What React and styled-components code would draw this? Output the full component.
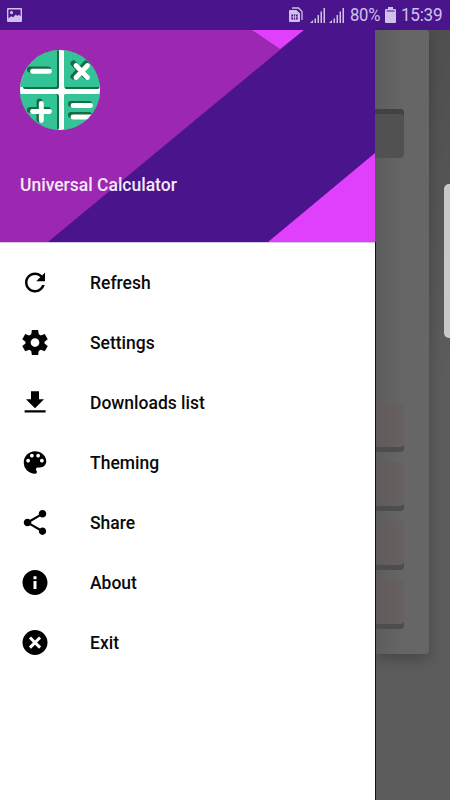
import React from 'react'
import styled, { createGlobalStyle } from 'styled-components'

const menuItems = [
  {
    label: 'Refresh',
    path: 'M17.65 6.35C16.2 4.9 14.21 4 12 4c-4.42 0-7.99 3.58-7.99 8s3.57 8 7.99 8c3.73 0 6.84-2.55 7.73-6h-2.08c-.82 2.33-3.04 4-5.65 4-3.31 0-6-2.69-6-6s2.69-6 6-6c1.66 0 3.14.69 4.22 1.78L13 11h7V4l-2.35 2.35z',
  },
  {
    label: 'Settings',
    path: 'M9.5 2h5l.5 3.3 1.7 1 3.1-1.2 2.4 4.200-2.600 2v1.400l2.600 2-2.400 4.200-3.100-1.200-1.700 1-.5 3.300h-5l-.5-3.300-1.700-1-3.100 1.200-2.400-4.200 2.600-2v-1.400l-2.600-2 2.400-4.200 3.100 1.200 1.700-1zM12 8.500a3.500 3.500 0 1 0 0 7 3.500 3.500 0 0 0 0-7z',
  },
  {
    label: 'Downloads list',
    path: 'M19.2 9.300h-4V3H8.800v6.300h-4l7.200 7.200 7.200-7.200zM3.700 18.200V20h16.800v-1.800z',
  },
  {
    label: 'Theming',
    path: 'M12 3c-4.97 0-9 4.03-9 9s4.03 9 9 9c.83 0 1.5-.67 1.5-1.5 0-.39-.15-.74-.39-1.01-.23-.26-.38-.61-.38-.99 0-.83.67-1.5 1.5-1.5H16c2.76 0 5-2.24 5-5 0-4.42-4.03-8-9-8zm-5.5 9c-.83 0-1.5-.67-1.5-1.5S5.67 9 6.5 9 8 9.67 8 10.5 7.33 12 6.5 12zm3-4C8.67 8 8 7.33 8 6.5S8.67 5 9.5 5s1.5.67 1.5 1.5S10.33 8 9.5 8zm5 0c-.83 0-1.5-.67-1.5-1.5S13.67 5 14.5 5s1.5.67 1.5 1.5S15.33 8 14.5 8zm3 4c-.83 0-1.5-.67-1.5-1.5S16.67 9 17.5 9s1.5.67 1.5 1.5-.67 1.5-1.5 1.5z',
  },
  {
    label: 'Share',
    path: 'M18 16.08c-.76 0-1.44.3-1.96.77L8.91 12.7c.05-.23.09-.46.09-.7s-.04-.47-.09-.7l7.05-4.11c.54.5 1.25.81 2.04.81 1.66 0 3-1.34 3-3s-1.34-3-3-3-3 1.34-3 3c0 .24.04.47.09.7L8.04 9.81C7.5 9.31 6.79 9 6 9c-1.66 0-3 1.34-3 3s1.34 3 3 3c.79 0 1.5-.31 2.04-.81l7.12 4.16c-.05.21-.08.43-.08.65 0 1.61 1.31 2.92 2.92 2.92 1.61 0 2.92-1.31 2.92-2.92s-1.31-2.92-2.92-2.92z',
  },
  {
    label: 'About',
    path: 'M12 2C6.48 2 2 6.48 2 12s4.48 10 10 10 10-4.48 10-10S17.52 2 12 2zm1.200 15.200h-2.400v-6.400h2.400v6.400zm0-7.900h-2.400V6.900h2.400v2.400z',
  },
  {
    label: 'Exit',
    path: 'M12 2a10 10 0 1 0 0 20 10 10 0 0 0 0-20zm4.900 13.200l-1.700 1.700-3.200-3.200-3.200 3.200-1.700-1.700 3.200-3.200-3.200-3.200 1.700-1.700 3.200 3.200 3.200-3.200 1.700 1.700-3.200 3.200z',
  },
]

const PictureIcon = () => (
  <svg width='15' height='14' viewBox='0 0 15 14'>
    <path
      fill='#cfc1ea'
      fillRule='evenodd'
      d='M1 0h13a1 1 0 0 1 1 1v12a1 1 0 0 1-1 1H1a1 1 0 0 1-1-1V1a1 1 0 0 1 1-1zM1.400 1.400v8.800l3-2 1.800 1 2.600-2.600 1.500 1.400 1.500-1.200 1.800 1.500V1.400zM4.500 3a1.600 1.600 0 1 1 0 3.200 1.600 1.600 0 0 1 0-3.200z'
    />
  </svg>
)

const SimIcon = () => (
  <svg width='14' height='16' viewBox='0 0 14 16'>
    <path d='M3 1h6.500l3.500 3.500V13' fill='none' stroke='#cfc1ea' strokeWidth='1.300' />
    <path
      fill='#cfc1ea'
      fillRule='evenodd'
      d='M1 3h6.500L11 6.500V14a1 1 0 0 1-1 1H1a1 1 0 0 1-1-1V4a1 1 0 0 1 1-1zM2.300 7.500v5h6.400v-5z'
    />
    <path d='M4.500 7.500v5M6.500 7.500v5M2.500 10h6' stroke='#cfc1ea' strokeWidth='0.900' />
  </svg>
)

const SignalIcon = () => (
  <svg width='16' height='15' viewBox='0 0 16 15'>
    <path d='M0 15l3-3v3zM4.500 10.500H6V15H4.500zM7.500 7H9v8H7.500zM10.500 3.500H12V15h-1.500zM13.500 0H15v15h-1.500z' fill='#cfc1ea' />
  </svg>
)

const BatteryIcon = () => (
  <svg width='11' height='16' viewBox='0 0 11 16'>
    <path d='M3 0h5v2h2a1 1 0 0 1 1 1v12a1 1 0 0 1-1 1H1a1 1 0 0 1-1-1V3a1 1 0 0 1 1-1h2z' fill='#cfc1ea' />
    <path d='M1.500 4h8' stroke='#6b46a5' strokeWidth='1.400' />
  </svg>
)

const Logo = () => (
  <svg width='80' height='80' viewBox='0 0 80 80'>
    <clipPath id='disc'>
      <circle cx='40' cy='40' r='40' />
    </clipPath>
    <g clipPath='url(#disc)'>
      <rect width='80' height='80' fill='#fff' />
      <g fill='#146c42'>
        <rect x='3' y='-5' width='36' height='44' rx='2' />
        <rect x='44.500' y='-5' width='35' height='44' rx='2' />
        <rect x='-5' y='44' width='44' height='36' rx='2' />
        <rect x='44.500' y='44' width='40' height='40' rx='2' />
      </g>
      <g fill='#34c297'>
        <rect x='-2' y='-5' width='39' height='42' rx='1.500' />
        <rect x='44' y='-5' width='35' height='42' rx='1.500' />
        <rect x='-5' y='44' width='42' height='40' rx='1.500' />
        <rect x='44' y='44' width='40' height='40' rx='1.500' />
      </g>
      <g strokeLinecap='round' fill='none'>
        <path
          d='M10 19.500h18M53.500 13.500l12.500 13M66 13.500l-12.500 13M10 60h18M19.500 51.500v18M51 54h18M51 65h18'
          stroke='#146c42'
          strokeWidth='6'
        />
        <path
          d='M12.500 21.200h17M56 15.500l11.500 12M67.500 15.500L56 27.500M12.500 61.500h17M21.300 53.500v17M53 55.500h17.500M53 67h17.500'
          stroke='#fff'
          strokeWidth='4.900'
        />
      </g>
    </g>
  </svg>
)

const App = () => {
  return (
    <>
      <GlobalStyle />
      <Screen>
        <StatusBar>
          <PictureIcon />
          <StatusGroup>
            <SimIcon />
            <Signals>
              <SignalIcon />
              <SignalIcon />
            </Signals>
            <StatusText $width={35}>80%</StatusText>
            <BatteryIcon />
            <Clock $width={44}>15:39</Clock>
          </StatusGroup>
        </StatusBar>
        <Content>
          <Drawer>
            <Header>
              <HeaderArt viewBox='0 0 375 212' preserveAspectRatio='none'>
                <rect width='375' height='212' fill='#9c27b0' />
                <path d='M252 0h52l-24 19z' fill='#e040fb' />
                <path d='M304 0h71v212H48z' fill='#4a148c' />
                <path d='M375 123v89H268z' fill='#e040fb' />
              </HeaderArt>
              <Logo />
              <Title>Universal Calculator</Title>
            </Header>
            <Menu>
              {menuItems.map(({ label, path }) => (
                <MenuItem key={label}>
                  <svg width='30' height='30' viewBox='0 0.4 24 24'>
                    <path d={path} fillRule='evenodd' />
                  </svg>
                  <span>{label}</span>
                </MenuItem>
              ))}
            </Menu>
          </Drawer>
          <Page>
            <Card>
              <Display />
              <Keys>
                <Key />
                <Key />
                <Key />
                <Key />
              </Keys>
            </Card>
            <EdgeHandle />
          </Page>
        </Content>
      </Screen>
    </>
  )
}

const GlobalStyle = createGlobalStyle`
  * {
    box-sizing: border-box;
  }
  body {
    margin: 0;
    font-family: Roboto, sans-serif;
  }
  svg {
    display: block;
    flex-shrink: 0;
  }
`

const Screen = styled.div`
  width: 450px;
  height: 800px;
  display: flex;
  flex-direction: column;
  overflow: hidden;
`

const StatusBar = styled.div`
  height: 30px;
  padding: 0 5px 0 7px;
  display: flex;
  align-items: center;
  justify-content: space-between;
  background: #4a148c;
  color: #cfc1ea;
`

const StatusGroup = styled.div`
  display: flex;
  align-items: center;
`

const Signals = styled.div`
  display: flex;
  gap: 3px;
  margin: 0 5px 0 7px;
`

const StatusText = styled.span`
  width: ${({ $width }) => $width}px;
  font-size: 18.5px;
  line-height: 28px;
  letter-spacing: -0.3px;
  white-space: nowrap;
  transform: scaleX(0.9);
  transform-origin: left;
`

const Clock = styled(StatusText)`
  margin-left: 5px;
  transform: scaleX(0.925);
`

const Content = styled.div`
  flex: 1;
  display: flex;
`

/* stays above the card shadow of the page behind it */
const Drawer = styled.aside`
  width: 375px;
  background: #fff;
  z-index: 1;
`

const Header = styled.header`
  position: relative;
  height: 212px;
  padding: 20px;
  > * {
    position: relative;
  }
`

const HeaderArt = styled.svg`
  && {
    position: absolute;
  }
  top: 0;
  left: 0;
  width: 100%;
  height: 100%;
`

const Title = styled.h1`
  margin: 45px 0 0;
  color: #f4e8fa;
  font-size: 17.5px;
  font-weight: 500;
  line-height: 20px;
`

const Menu = styled.ul`
  height: 558px;
  margin: 0;
  padding: 10px 0 0;
  border-top: 1px solid #d5c6df;
  box-shadow: 1px 0 #111;
  list-style: none;
`

const MenuItem = styled.li`
  height: 60px;
  padding: 0 20px;
  display: flex;
  align-items: center;
  gap: 40px;
  color: #0a0a0a;
  font-size: 17.5px;
  font-weight: 500;
`

const Page = styled.main`
  position: relative;
  flex: 1;
  background: linear-gradient(#4f4f4f, #5c5c5c 45%, #5c5c5c);
`

const Card = styled.div`
  width: 54px;
  height: 624px;
  padding: 79px 25px 0 0;
  border-radius: 0 3px 4px 0;
  background: linear-gradient(90deg, #5c5c5c, #666 28px);
  box-shadow: 0 5px 14px rgba(0, 0, 0, 0.24);
`

const Display = styled.div`
  height: 49px;
  border-radius: 0 4px 4px 0;
  background: #515151;
  box-shadow: inset 0 5px #424242;
`

const Keys = styled.div`
  margin-top: 245px;
  display: grid;
  gap: 10px;
`

const Key = styled.div`
  height: 49px;
  border-radius: 0 4px 4px 0;
  background: linear-gradient(90deg, #5f5a5b, #686162);
  box-shadow: inset 0 -5px #4d4d4d;
`

const EdgeHandle = styled.div`
  position: absolute;
  top: 154px;
  right: 0;
  width: 6px;
  height: 154px;
  border-radius: 5px 0 0 5px;
  background: #c9c9c9;
`

export default App
